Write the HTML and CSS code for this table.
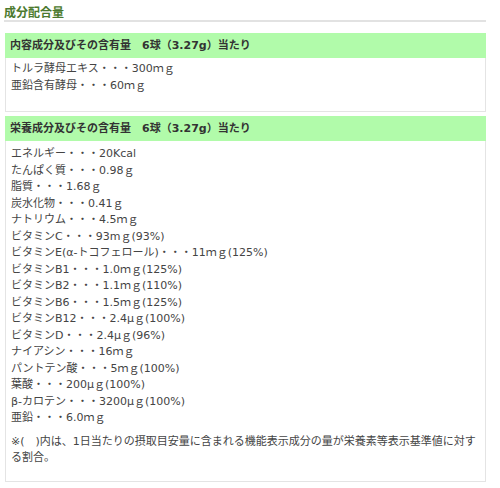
FILE: index.html
```html
<!DOCTYPE html>
<html lang="ja">
<head>
<meta charset="utf-8">
<link rel="stylesheet" href="styles.css">
</head>
<body>
<div class="page">
  <h2 class="title">成分配合量</h2>
  <section class="box box-first">
    <div class="box-head">内容成分及びその含有量　6球（3.27g）当たり</div>
    <div class="box-body">
      <div>トルラ酵母エキス・・・300ｍｇ</div>
      <div>亜鉛含有酵母・・・60ｍｇ</div>
    </div>
  </section>
  <section class="box box-second">
    <div class="box-head">栄養成分及びその含有量　6球（3.27g）当たり</div>
    <div class="box-body">
      <div>エネルギー・・・20Kcal</div>
      <div>たんぱく質・・・0.98ｇ</div>
      <div>脂質・・・1.68ｇ</div>
      <div>炭水化物・・・0.41ｇ</div>
      <div>ナトリウム・・・4.5ｍｇ</div>
      <div>ビタミンC・・・93mｇ(93%)</div>
      <div>ビタミンE(α-トコフェロール)・・・11ｍｇ(125%)</div>
      <div>ビタミンB1・・・1.0ｍｇ(125%)</div>
      <div>ビタミンB2・・・1.1ｍｇ(110%)</div>
      <div>ビタミンB6・・・1.5ｍｇ(125%)</div>
      <div>ビタミンB12・・・2.4μｇ(100%)</div>
      <div>ビタミンD・・・2.4μｇ(96%)</div>
      <div>ナイアシン・・・16ｍｇ</div>
      <div>パントテン酸・・・5ｍｇ(100%)</div>
      <div>葉酸・・・200μｇ(100%)</div>
      <div>β-カロテン・・・3200μｇ(100%)</div>
      <div>亜鉛・・・6.0ｍｇ</div>
      <p class="note">※(　)内は、1日当たりの摂取目安量に含まれる機能表示成分の量が栄養素等表示基準値に対する割合。</p>
    </div>
  </section>
</div>
</body>
</html>
```
FILE: styles.css
```css
html, body {
  margin: 0;
  padding: 0;
  background: #ffffff;
}
.page {
  width: 481px;
  padding: 4px 0 0 5px;
  font-family: "DejaVu Sans", "Noto Sans CJK JP", sans-serif;
  font-size: 11px;
  line-height: 16.5px;
  color: #444444;
}
.title {
  margin: 0;
  font-family: "Noto Sans CJK JP", sans-serif;
  font-size: 12px;
  line-height: 16px;
  font-weight: bold;
  color: #4b7a2e;
  border-bottom: 2px solid #e2e2e2;
  margin-left: -1px;
  height: 16px;
}
.box {
  border: 1px solid #e4e4e4;
  border-top: none;
}
.box-first {
  margin-top: 11px;
}
.box-second {
  margin-top: 4px;
}
.box-head {
  background: #b1fbaa;
  height: 25px;
  line-height: 25px;
  padding-left: 5px;
  margin: 0 -1px;
  font-weight: bold;
  color: #333333;
}
.box-body {
  padding: 3px 4px 17px 5px;
}
.box-second .box-body {
  padding: 5px 4px 14px 5px;
}
.note {
  margin: 7px 0 0 0;
}
```
